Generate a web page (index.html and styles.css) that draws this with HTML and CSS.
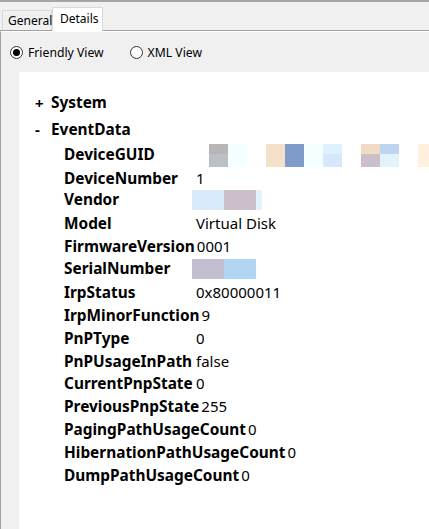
FILE: index.html
```html
<!DOCTYPE html>
<html>
<head>
<meta charset="utf-8">
<link rel="stylesheet" href="styles.css">
</head>
<body>
<div class="window">
  <div class="topbar"></div>
  <div class="tabs">
    <div class="tab">General</div>
    <div class="tab active">Details</div>
  </div>
  <div class="page">
    <div class="radios">
      <label class="radio"><span class="dot checked"></span>Friendly View</label>
      <label class="radio"><span class="dot"></span>XML View</label>
    </div>
    <div class="panel">
      <div class="node"><span class="sign">+</span><span class="key">System</span></div>
      <div class="node open"><span class="sign">-</span><span class="key">EventData</span></div>
      <div class="children">
        <div class="row"><span class="key">DeviceGUID</span>
          <span class="blur guid">
            <i style="--t:#b9b4b6;--b:#bcc0c2"></i><i style="--t:#f4ffff;--b:#f4ffff"></i><i class="gap"></i><i style="--t:#f5e1ca;--b:#f5e1ca"></i><i style="--t:#7f9bc8;--b:#7f9bc8"></i><i style="--t:#f4ffff;--b:#f4ffff"></i><i style="--t:#e0f0fc;--b:#d6e8fc"></i><i class="gap"></i><i style="--t:#f0dcc4;--b:#cbbfcb"></i><i style="--t:#bdd5ee;--b:#e3f3fc"></i><i class="gap"></i><i style="--t:#fff0dc;--b:#fff0dc"></i>
          </span>
        </div>
        <div class="row"><span class="key">DeviceNumber</span><span class="val">1</span></div>
        <div class="row"><span class="key">Vendor</span>
          <span class="blur wide"><i style="--t:#d6eafc;--b:#d6eafc"></i><i style="--t:#cbbfcb;--b:#cbbfcb"></i><i class="thin" style="--t:#e3f3fc;--b:#e3f3fc"></i></span>
        </div>
        <div class="row"><span class="key">Model</span><span class="val">Virtual Disk</span></div>
        <div class="row"><span class="key">FirmwareVersion</span><span class="val">0001</span></div>
        <div class="row"><span class="key">SerialNumber</span>
          <span class="blur wide serial"><i style="--t:#c4bfd0;--b:#c4bfd0"></i><i style="--t:#b0d6f3;--b:#b0d6f3"></i></span>
        </div>
        <div class="row"><span class="key">IrpStatus</span><span class="val">0x80000011</span></div>
        <div class="row"><span class="key">IrpMinorFunction</span><span class="val">9</span></div>
        <div class="row"><span class="key">PnPType</span><span class="val">0</span></div>
        <div class="row"><span class="key">PnPUsageInPath</span><span class="val">false</span></div>
        <div class="row"><span class="key">CurrentPnpState</span><span class="val">0</span></div>
        <div class="row"><span class="key">PreviousPnpState</span><span class="val">255</span></div>
        <div class="row"><span class="key">PagingPathUsageCount</span><span class="val">0</span></div>
        <div class="row"><span class="key">HibernationPathUsageCount</span><span class="val">0</span></div>
        <div class="row"><span class="key">DumpPathUsageCount</span><span class="val">0</span></div>
      </div>
    </div>
  </div>
</div>
</body>
</html>
```
FILE: styles.css
```css
html, body {
  margin: 0;
  padding: 0;
  height: 100%;
  overflow: hidden;
}
body {
  background: #f0f0f0;
  font-family: "Noto Sans", "DejaVu Sans", sans-serif;
  color: #000;
}
.window {
  display: flex;
  flex-direction: column;
  height: 529px;
}
.topbar {
  height: 2px;
  background: #a5a5a5;
}
.tabs {
  display: flex;
  align-items: flex-end;
  height: 28px;
  border-bottom: 1px solid #a0a0a0;
  padding-left: 2px;
  font-size: 12px;
}
.tab {
  box-sizing: border-box;
  height: 20px;
  padding: 0 5px;
  border: 1px solid #d9d9d9;
  border-bottom: none;
  background: #f0f0f0;
  display: flex;
  align-items: center;
  width: 50px;
}
.tab.active {
  height: 24px;
  width: 51px;
  margin-bottom: -1px;
  background: #fff;
  border-color: #d9d9d9;
  padding-left: 7px;
  align-items: flex-start;
  padding-top: 2px;
}
.page {
  flex: 1;
  display: flex;
  flex-direction: column;
  border-left: 1px solid #a0a0a0;
  border-top: 1px solid #ffffff;
  min-height: 0;
}
.radios {
  display: flex;
  height: 40px;
  align-items: center;
  padding-left: 9px;
  font-size: 12.2px;
  gap: 26px;
}
.radio {
  display: flex;
  align-items: center;
  gap: 5px;
}
.dot {
  box-sizing: border-box;
  width: 13px;
  height: 13px;
  border-radius: 50%;
  border: 1px solid #333;
  background: #fff;
  display: flex;
  align-items: center;
  justify-content: center;
}
.dot.checked::after {
  content: "";
  width: 7px;
  height: 7px;
  border-radius: 50%;
  background: #000;
}
.panel {
  flex: 1;
  margin-left: 18px;
  background: #fff;
  padding: 19px 0 0 16px;
  font-size: 15px;
}
.node {
  display: flex;
  height: 23px;
  align-items: center;
  font-weight: bold;
}
.node.open {
  margin-top: 3.5px;
}
.sign {
  width: 16px;
}
.children {
  padding-left: 29px;
  margin-top: 3.2px;
}
.row {
  display: flex;
  height: 22.88px;
  line-height: 22.88px;
  align-items: baseline;
}
.key {
  font-weight: bold;
  font-size: 15.4px;
}
.row .key {
  min-width: 130px;
  margin-right: 2px;
}
.val {
  white-space: nowrap;
}
.blur {
  display: flex;
  margin-left: 13px;
  align-self: stretch;
}
.blur i {
  display: block;
  width: 19px;
  background: linear-gradient(var(--t) 0 45%, var(--b) 45% 100%);
}
.blur i.gap {
  background: transparent;
}
.blur.wide {
  margin-left: -4px;
  margin-top: 1px;
  margin-bottom: 2px;
}
.blur.wide i {
  width: 32px;
}
.blur.wide i.thin {
  width: 6px;
}
```
